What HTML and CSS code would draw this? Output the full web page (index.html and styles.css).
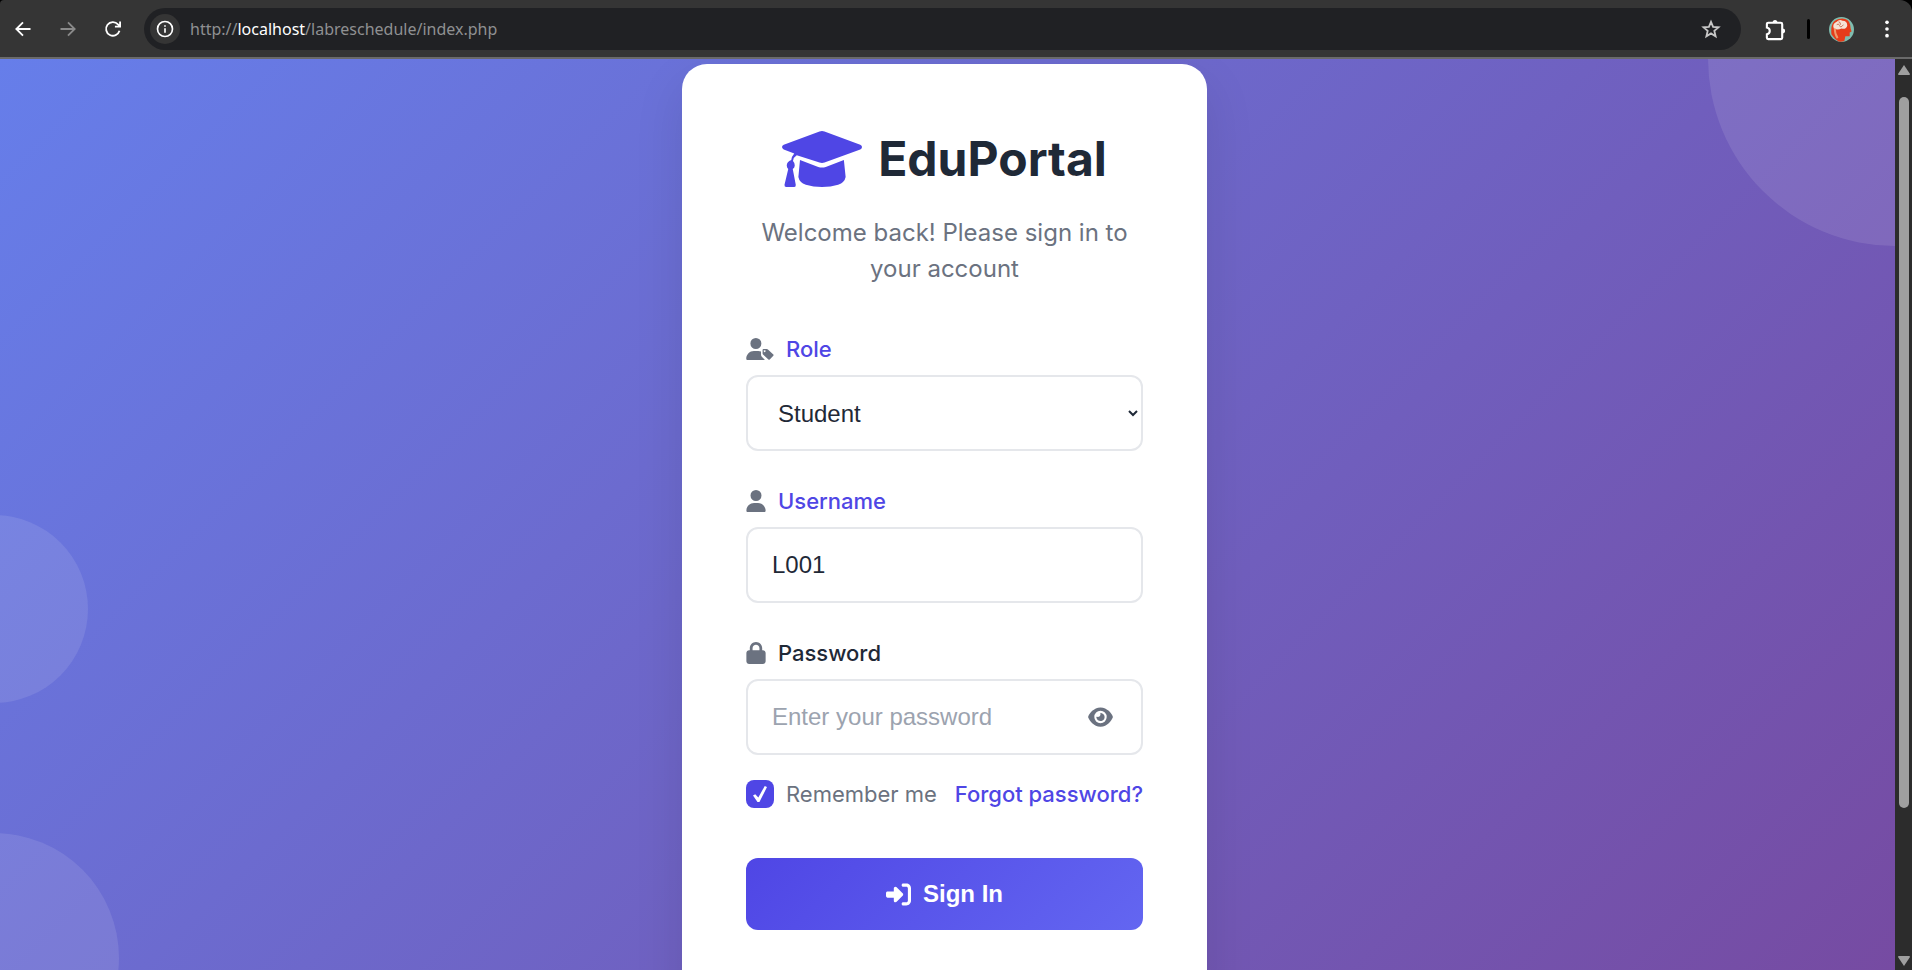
FILE: index.html
```html
<!DOCTYPE html>
<html lang="en">
<head>
<meta charset="utf-8">
<title>EduPortal - Sign In</title>
<link rel="stylesheet" href="styles.css">
</head>
<body>
<div class="browser">
  <header class="toolbar">
    <button class="tool" type="button" aria-label="Back"><svg viewBox="0 0 24 24" class="glyph"><path d="M21 12H4M12 4l-8 8 8 8"/></svg></button>
    <button class="tool dim" type="button" aria-label="Forward"><svg viewBox="0 0 24 24" class="glyph"><path d="M3 12h17M12 4l8 8-8 8"/></svg></button>
    <button class="tool" type="button" aria-label="Reload"><svg viewBox="0 0 24 24" class="glyph"><path d="M19.8 14.2A8.2 8.2 0 1 1 18 6.4l2 2M20.5 3v6.2h-6.2"/></svg></button>
    <div class="omnibox">
      <button class="site-info" type="button" aria-label="Site information"><svg viewBox="0 0 24 24" class="glyph info"><circle cx="12" cy="12" r="10"/><path d="M12 11v6M12 7v2"/></svg></button>
      <div class="url">http://<span class="host">localhost</span>/labreschedule/index.php</div>
      <button class="star" type="button" aria-label="Bookmark"><svg viewBox="0 0 24 24" class="glyph"><path d="M12 3.5l2.5 6 6.500.5-5 4.300 1.500 6.400L12 17.300l-5.500 3.400L8 14.300 3 10l6.500-.5z"/></svg></button>
    </div>
    <button class="tool" type="button" aria-label="Extensions"><svg viewBox="0 0 24 24" class="glyph extensions"><path d="M4.500 5H17.500q1.500 0 1.500 1.500V20.500q0 1.500-1.500 1.500H4.500q-1.500 0-1.500-1.500V17q3-.8 3-3.500T3 10V6.500Q3 5 4.500 5z"/><path class="knob" d="M9 5q0-3 2.500-3T14 5zM19 11q3 0 3 2.500T19 16z"/></svg></button>
    <span class="divider"></span>
    <button class="tool" type="button" aria-label="Profile"><svg viewBox="0 0 26 26" class="avatar"><circle cx="13" cy="13" r="13" fill="#7fbdb0"/><path d="M2.500 18Q1 4 10 2q10-2 12 6l.5 4 1 3-2 1v4h-4.500l-1 5q-3 1-6 .5-4-2-7.500-7.500z" fill="#e63c1a"/><path d="M5 12Q3 7 8 5q3-3 6-1 5 0 5 5-1 4-6 3-4 2-8 0z" fill="#f6e3d6"/><path d="M6 12q0 6 3 10" fill="none" stroke="#f09a6c" stroke-width="2"/><path d="M8 8q2-2 3 1t4-1M10 5q2 0 2 3" fill="none" stroke="#c9765b"/></svg></button>
    <button class="tool menu" type="button" aria-label="Menu"><svg viewBox="0 0 24 24" class="glyph solid"><circle cx="12" cy="4" r="2.200"/><circle cx="12" cy="12" r="2.200"/><circle cx="12" cy="20" r="2.200"/></svg></button>
  </header>
  <div class="viewport">
    <main class="page">
      <span class="bubble bubble-top"></span>
      <span class="bubble bubble-mid"></span>
      <span class="bubble bubble-low"></span>
      <section class="card">
        <div class="brand">
          <svg class="cap" viewBox="0 0 640 512"><path d="M320 32q-10 0-20 4L14 142q-14 6-14 18t14 19l84 32q-20 22-24 52-36 12-36 44 0 17 12 28L20 462q-2 18 14 18h64q14 0 12-18L86 335q16-12 16-28 0-22-14-36 4-30 30-45l182 58q20 7 40 0l286-105q14-6 14-19t-14-18L340 36q-10-4-20-4z"/><path d="M144 264l-13 136q8 44 60 62 58 18 129 18t129-18q52-18 60-62L495 264l-145 55q-30 11-60 0z"/></svg>
          <h1 class="brand-name">EduPortal</h1>
        </div>
        <p class="welcome">Welcome back! Please sign in to your account</p>
        <form class="form">
          <div class="field">
            <label class="label accent" for="role"><svg class="icon icon-wide" viewBox="0 0 640 512"><path d="M224 256A128 128 0 1 0 224 0a128 128 0 1 0 0 256zM178 304C80 304 0 384 0 482c0 17 13 30 30 30h390q6 0 12-3L362 436q-18-18-18-44v-78q-30-10-62-10z"/><path fill-rule="evenodd" d="M402 256h78q14 0 24 10l126 116q15 16 0 32l-84 88q-15 14-30 0L390 384q-10-10-10-24v-82q0-22 22-22zM428 284a22 22 0 1 0 .1 0z"/></svg>Role</label>
            <select class="control select" id="role"><option>Student</option><option>Lecturer</option></select>
          </div>
          <div class="field">
            <label class="label accent" for="username"><svg class="icon" viewBox="0 0 448 512"><path d="M224 256A128 128 0 1 0 224 0a128 128 0 1 0 0 256zm-45.700 48C79.800 304 0 383.800 0 482.300C0 498.700 13.300 512 29.700 512H418.300c16.400 0 29.700-13.300 29.700-29.700C448 383.800 368.200 304 269.700 304H178.300z"/></svg>Username</label>
            <input class="control" id="username" type="text" value="L001">
          </div>
          <div class="field">
            <label class="label" for="password"><svg class="icon" viewBox="0 0 448 512"><path d="M144 144v48H304V144c0-44.200-35.800-80-80-80s-80 35.800-80 80zM80 192V144C80 64.500 144.500 0 224 0s144 64.500 144 144v48h16c35.300 0 64 28.700 64 64V448c0 35.300-28.700 64-64 64H64c-35.300 0-64-28.700-64-64V256c0-35.300 28.700-64 64-64H80z"/></svg>Password</label>
            <div class="control password-box">
              <input class="password-input" id="password" type="password" placeholder="Enter your password">
              <button class="reveal" type="button" aria-label="Show password"><svg class="eye" viewBox="0 0 576 512"><path d="M288 32c-80.800 0-145.500 36.800-192.600 80.600C48.600 156 17.300 208 2.500 243.700c-3.300 7.900-3.300 16.700 0 24.600C17.300 304 48.600 356 95.400 399.400C142.500 443.200 207.200 480 288 480s145.500-36.800 192.600-80.600c46.800-43.500 78.100-95.400 93-131.100c3.300-7.900 3.300-16.700 0-24.600c-14.900-35.700-46.200-87.700-93-131.100C433.500 68.800 368.800 32 288 32zM144 256a144 144 0 1 1 288 0 144 144 0 1 1-288 0zm144-64c0 35.300-28.700 64-64 64c-7.100 0-13.900-1.200-20.300-3.300c-5.500-1.800-11.900 1.600-11.700 7.400c.3 6.900 1.300 13.800 3.200 20.700c13.700 51.200 66.400 81.600 117.600 67.900s81.600-66.400 67.900-117.600c-11.100-41.500-47.800-69.400-88.600-71.100c-5.800-.2-9.200 6.100-7.400 11.700c2.100 6.400 3.300 13.200 3.300 20.300z"/></svg></button>
            </div>
          </div>
          <div class="options">
            <label class="remember" for="remember"><input class="check" id="remember" type="checkbox" checked>Remember me</label>
            <a class="forgot" href="#">Forgot password?</a>
          </div>
          <button class="submit" type="submit"><svg class="enter" viewBox="0 0 512 512"><path d="M217.900 105.900L340.700 228.700c7.200 7.200 11.300 17.100 11.300 27.300s-4.100 20.100-11.300 27.300L217.900 406.100c-6.400 6.400-15 9.900-24 9.900c-18.700 0-33.900-15.200-33.900-33.900l0-62.100L32 320c-17.700 0-32-14.300-32-32l0-64c0-17.700 14.300-32 32-32l128 0 0-62.100c0-18.700 15.200-33.900 33.900-33.900c9 0 17.600 3.600 24 9.900zM352 416l64 0c17.700 0 32-14.300 32-32l0-256c0-17.700-14.300-32-32-32l-64 0c-17.700 0-32-14.300-32-32s14.300-32 32-32l64 0c53 0 96 43 96 96l0 256c0 53-43 96-96 96l-64 0c-17.700 0-32-14.300-32-32s14.300-32 32-32z"/></svg>Sign In</button>
        </form>
      </section>
    </main>
    <div class="scrollbar">
      <svg class="arrow" viewBox="0 0 12 10"><path d="M6 0l6 9q0 1-1 1H1q-1 0-1-1z"/></svg>
      <span class="track"><span class="thumb"></span></span>
      <svg class="arrow" viewBox="0 0 12 10"><path d="M6 10L0 1q0-1 1-1h10q1 0 1 1z"/></svg>
    </div>
  </div>
</div>
</body>
</html>
```
FILE: styles.css
```css
* { box-sizing: border-box; }

body {
  margin: 0;
  background: #000;
  font-family: Inter, "Liberation Sans", sans-serif;
}

button {
  padding: 0;
  border: 0;
  background: none;
  color: inherit;
}

.browser {
  display: flex;
  flex-direction: column;
  height: 100vh;
}

/* Browser toolbar */
.toolbar {
  display: flex;
  flex: none;
  align-items: center;
  padding: 8px 3px 7px 0;
  border-bottom: 2px solid #6a6a6a;
  border-radius: 4px 12px 0 0;
  background: #353535;
  color: #fff;
}

.tool {
  display: grid;
  width: 45px;
  flex: none;
  place-items: center;
}

.dim { color: #8a8a8a; }

.glyph {
  width: 20px;
  height: 20px;
  fill: none;
  stroke: currentColor;
  stroke-width: 2.2;
}

.solid {
  fill: currentColor;
  stroke: none;
}

.extensions {
  width: 23px;
  height: 23px;
}

.knob {
  fill: currentColor;
  stroke: none;
}

.omnibox {
  display: flex;
  flex: 1;
  align-items: center;
  height: 42px;
  margin: 0 12px 0 9px;
  padding: 0 20px 0 6px;
  border-radius: 21px;
  background: #202124;
}

.site-info {
  display: grid;
  width: 30px;
  height: 30px;
  place-items: center;
  border-radius: 50%;
  background: #353535;
}

.info {
  width: 18px;
  height: 18px;
}

.url {
  flex: 1;
  margin-left: 10px;
  color: #8f9092;
  font-family: "Noto Sans", sans-serif;
  font-size: 16px;
}

.host { color: #fff; }

.star {
  display: grid;
  color: #c7c7c7;
}

.divider {
  width: 3px;
  height: 20px;
  margin: 0 9px;
  border-radius: 2px;
  background: #000;
}

.avatar {
  width: 25px;
  height: 25px;
}

/* Page area */
.viewport {
  display: flex;
  flex: 1;
  min-height: 0;
}

.page {
  position: relative;
  display: flex;
  flex: 1;
  justify-content: center;
  align-items: flex-start;
  overflow: hidden;
  padding: 5px 6px 0 0;
  background: linear-gradient(135deg, #667eea 0%, #764ba2 100%);
}

.bubble {
  position: absolute;
  border-radius: 50%;
  background: rgba(255, 255, 255, 0.1);
}

.bubble-top {
  top: -188px;
  right: -188px;
  width: 375px;
  height: 375px;
}

.bubble-mid {
  top: 50%;
  left: -100px;
  width: 188px;
  height: 188px;
}

.bubble-low {
  bottom: -113px;
  left: -131px;
  width: 250px;
  height: 250px;
}

.card {
  position: relative;
  width: 525px;
  flex: none;
  padding: 60px 64px 64px;
  border-radius: 25px;
  background: #fff;
  box-shadow: 0 20px 50px rgba(0, 0, 0, 0.1);
}

.brand {
  display: flex;
  justify-content: center;
  align-items: center;
  gap: 16px;
}

.cap {
  width: 80px;
  height: 64px;
  fill: #4f46e5;
}

.brand-name {
  margin: 0;
  color: #1f2937;
  font-size: 48px;
  font-weight: 700;
  line-height: 70px;
}

.welcome {
  margin: 21px 0 0;
  color: #6b7280;
  font-size: 24px;
  line-height: 36px;
  text-align: center;
}

.form { margin-top: 46px; }

.field {
  display: flex;
  flex-direction: column;
  gap: 10px;
  margin-bottom: 34px;
}

.label {
  display: flex;
  align-items: center;
  gap: 12px;
  color: #1f2937;
  font-size: 22px;
  font-weight: 500;
  line-height: 32px;
}

.accent { color: #4f46e5; }

.icon {
  width: 20px;
  height: 22px;
  fill: #6b7280;
}

.icon-wide { width: 28px; }

.control {
  width: 100%;
  height: 76px;
  padding: 0 24px;
  border: 2px solid #e5e7eb;
  border-radius: 12px;
  background: #fff;
  color: #1f2937;
  font-family: "Liberation Sans", Arial, sans-serif;
  font-size: 24px;
}

.select { padding: 0 0 0 26px; }

.password-box {
  display: flex;
  align-items: center;
}

.password-input {
  min-width: 0;
  flex: 1;
  padding: 0;
  border: 0;
  outline: 0;
  background: none;
  color: inherit;
  font: inherit;
}

.password-input::placeholder { color: #9ca3af; }

.reveal {
  display: grid;
  padding: 0 4px;
}

.eye {
  width: 25px;
  height: 22px;
  fill: #6b7280;
}

.options {
  display: flex;
  justify-content: space-between;
  align-items: center;
  margin-top: -9px;
  font-size: 22px;
  line-height: 28px;
  white-space: nowrap;
}

.remember {
  display: flex;
  align-items: center;
  gap: 12px;
  color: #6b7280;
}

.check {
  display: grid;
  width: 28px;
  height: 28px;
  margin: 0;
  place-items: center;
  border-radius: 8px;
  appearance: none;
  background: #4f46e5;
}

.check:checked::after {
  width: 14px;
  height: 16px;
  background: #fff;
  clip-path: polygon(0 60%, 16% 52%, 38% 72%, 84% 0, 100% 6%, 46% 100%, 32% 100%);
  content: "";
}

.forgot {
  color: #4f46e5;
  font-weight: 500;
  text-decoration: none;
}

.submit {
  display: flex;
  justify-content: center;
  align-items: center;
  gap: 12px;
  width: 100%;
  height: 72px;
  margin: 50px 0 20px;
  border-radius: 12px;
  background: linear-gradient(135deg, #4f46e5, #6366f1);
  color: #fff;
  font-family: "Liberation Sans", Arial, sans-serif;
  font-size: 24px;
  font-weight: 700;
}

.enter {
  width: 25px;
  height: 25px;
  fill: currentColor;
}

/* Scrollbar */
.scrollbar {
  display: flex;
  width: 17px;
  flex: none;
  flex-direction: column;
  align-items: center;
  gap: 22px;
  padding: 6px 0 4px;
  background: #2c2c2c;
}

.arrow {
  width: 12px;
  height: 10px;
  flex: none;
  fill: #9f9f9f;
}

.track { flex: 1; }

.thumb {
  display: block;
  width: 10px;
  height: 85%;
  border-radius: 5px;
  background: #9f9f9f;
}
```
